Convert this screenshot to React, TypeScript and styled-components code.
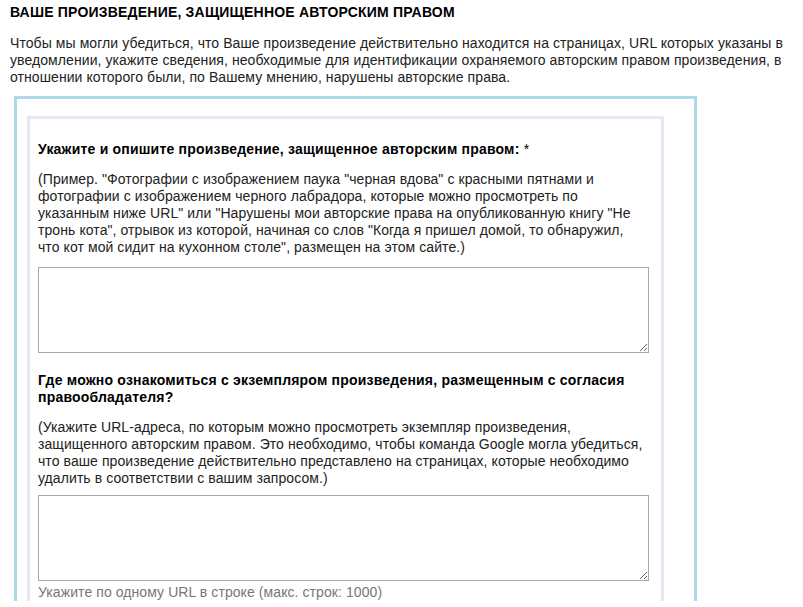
import React from 'react'
import styled, { createGlobalStyle } from 'styled-components'

const GlobalStyle = createGlobalStyle`
  body {
    margin: 0;
    background: #fff;
    font-family: 'Liberation Sans', Arial, sans-serif;
    font-size: 14px;
    letter-spacing: 0.08px;
    line-height: 17px;
    color: #222;
  }
`

const Page = styled.div`
  padding: 4px 10px 0 10px;
`

const SectionTitle = styled.h2`
  margin: 0;
  font-size: 14px;
  font-weight: bold;
  letter-spacing: 0.2px;
  text-transform: uppercase;
  color: #000;
`

const Intro = styled.p`
  margin: 14px 0 0 0;
`

const OuterBox = styled.div`
  margin: 10px 0 0 4px;
  width: 667px;
  border: 3px solid #add8e6;
  border-bottom: none;
  padding: 17px 0 0 10px;
`

const InnerBox = styled.div`
  width: 611px;
  border: 3px solid #e8e8f5;
  border-bottom: none;
  padding: 22px 12px 0 8px;
`

const Field = styled.div`
  & + & {
    margin-top: 19px;
  }
`

const Label = styled.label`
  display: block;
  font-weight: bold;
  letter-spacing: 0.2px;
  color: #000;
`

const Required = styled.span`
  font-weight: normal;
`

const Hint = styled.p`
  margin: 13px 0 0 0;
`

const TextArea = styled.textarea<{ $gap: number }>`
  display: block;
  box-sizing: border-box;
  width: 611px;
  height: 86px;
  margin-top: ${(props) => props.$gap}px;
  border: 1px solid #a9a9a9;
  font-family: 'Liberation Sans', Arial, sans-serif;
  font-size: 14px;
  resize: both;
`

const Note = styled.div<{ $muted?: boolean }>`
  margin-top: 3px;
  color: ${(props) => (props.$muted ? '#777' : '#222')};
`

const App: React.FC = () => {
  return (
    <>
      <GlobalStyle />
      <Page>
        <SectionTitle>Ваше произведение, защищенное авторским правом</SectionTitle>
        <Intro>
          Чтобы мы могли убедиться, что Ваше произведение действительно находится на страницах, URL которых указаны в
          уведомлении, укажите сведения, необходимые для идентификации охраняемого авторским правом произведения, в
          отношении которого были, по Вашему мнению, нарушены авторские права.
        </Intro>
        <OuterBox>
          <InnerBox>
            <Field>
              <Label>
                Укажите и опишите произведение, защищенное авторским правом: <Required>*</Required>
              </Label>
              <Hint>
                (Пример. "Фотографии с изображением паука "черная вдова" с красными пятнами и фотографии с изображением
                черного лабрадора, которые можно просмотреть по указанным ниже URL" или "Нарушены мои авторские права на
                опубликованную книгу "Не тронь кота", отрывок из которой, начиная со слов "Когда я пришел домой, то
                обнаружил, что кот мой сидит на кухонном столе", размещен на этом сайте.)
              </Hint>
              <TextArea $gap={11} />
            </Field>
            <Field>
              <Label>Где можно ознакомиться с экземпляром произведения, размещенным с согласия правообладателя?</Label>
              <Hint>
                (Укажите URL-адреса, по которым можно просмотреть экземпляр произведения, защищенного авторским правом.
                Это необходимо, чтобы команда Google могла убедиться, что ваше произведение действительно представлено на
                страницах, которые необходимо удалить в соответствии с вашим запросом.)
              </Hint>
              <TextArea $gap={8} />
              <Note $muted>Укажите по одному URL в строке (макс. строк: 1000)</Note>
            </Field>
          </InnerBox>
        </OuterBox>
      </Page>
    </>
  )
}

export default App
